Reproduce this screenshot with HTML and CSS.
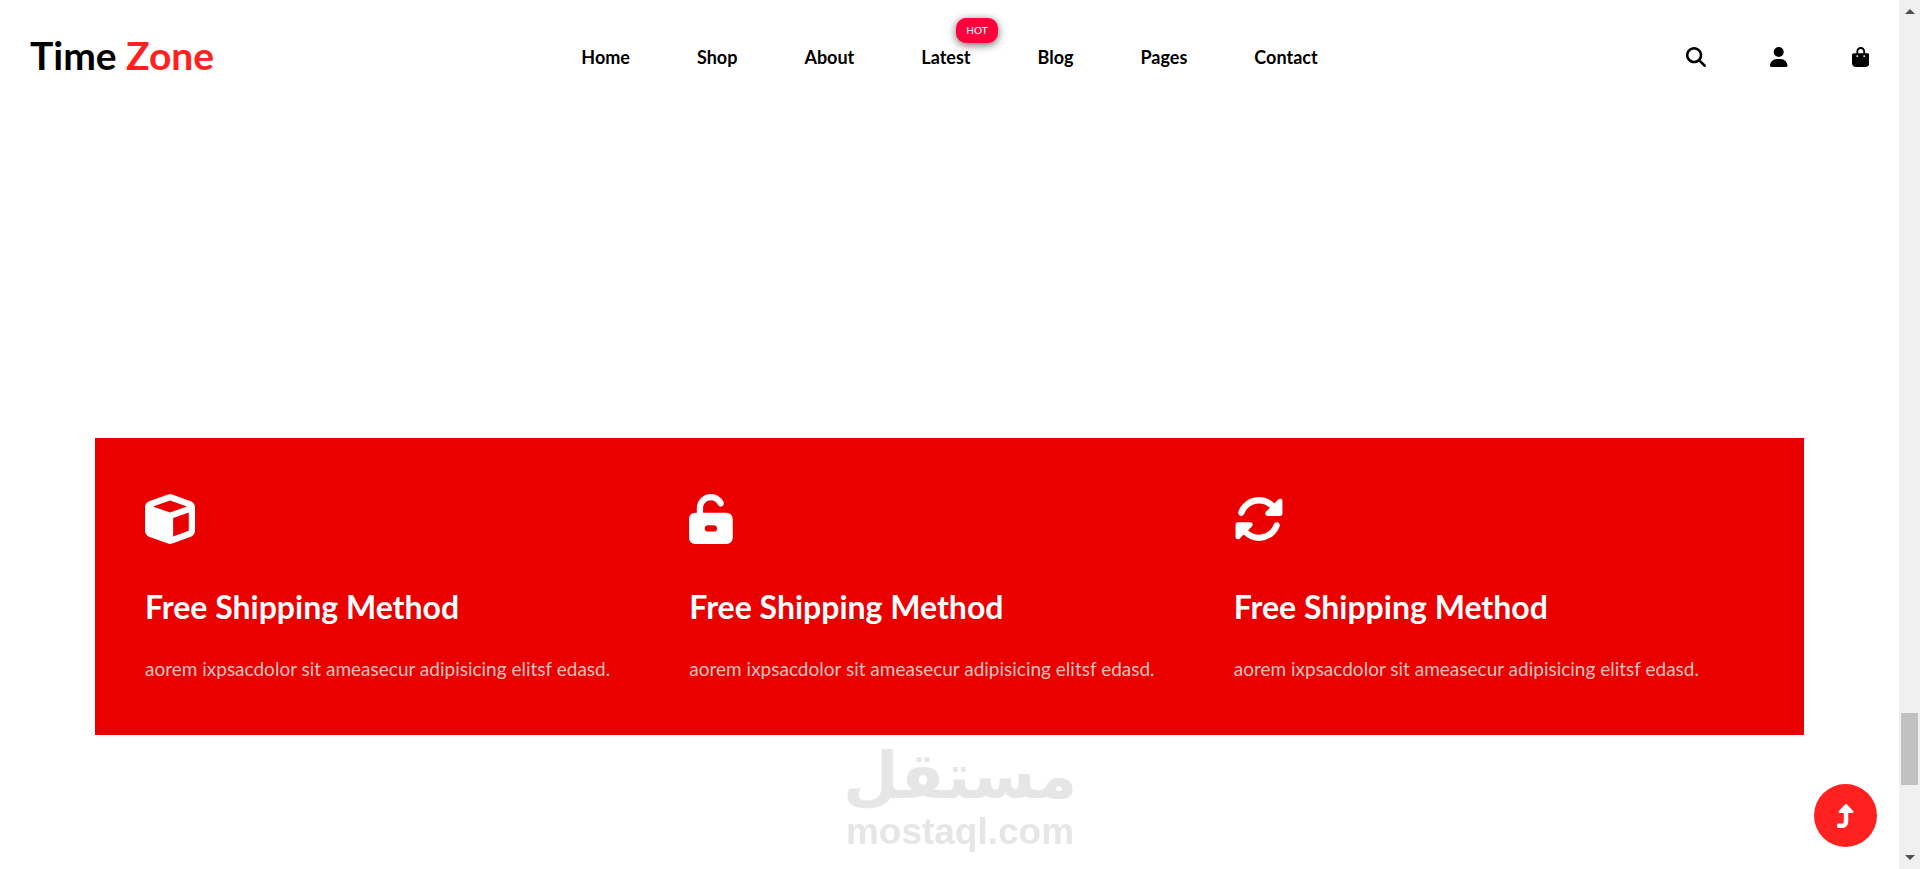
FILE: index.html
```html
<!DOCTYPE html>
<html lang="en">
<head>
<meta charset="utf-8">
<title>Time Zone</title>
<link rel="stylesheet" href="styles.css">
</head>
<body>
<div class="page">
  <header class="header">
    <a class="logo" href="#">Time <span class="logo-accent">Zone</span></a>
    <nav class="nav" aria-label="Main">
      <a href="#">Home</a>
      <a href="#">Shop</a>
      <a href="#">About</a>
      <a class="has-badge" href="#">Latest<span class="badge">HOT</span></a>
      <a href="#">Blog</a>
      <a href="#">Pages</a>
      <a href="#">Contact</a>
    </nav>
    <div class="actions">
      <button type="button" aria-label="Search"><svg class="icon-small" viewBox="0 0 512 512"><path d="M416 208c0 45.900-14.900 88.300-40 122.700L502.600 457.400c12.500 12.500 12.500 32.800 0 45.300s-32.800 12.500-45.300 0L330.700 376c-34.400 25.200-76.800 40-122.700 40C93.100 416 0 322.900 0 208S93.100 0 208 0S416 93.100 416 208zM208 352a144 144 0 1 0 0-288 144 144 0 1 0 0 288z"/></svg></button>
      <button type="button" aria-label="Account"><svg class="icon-small" viewBox="0 0 448 512"><path d="M224 256A128 128 0 1 0 224 0a128 128 0 1 0 0 256zm-45.700 48C79.800 304 0 383.800 0 482.300C0 498.700 13.300 512 29.700 512H418.300c16.400 0 29.700-13.300 29.700-29.700C448 383.800 368.200 304 269.700 304H178.300z"/></svg></button>
      <button type="button" aria-label="Cart"><svg class="icon-small" viewBox="0 0 448 512"><path d="M160 112c0-35.300 28.700-64 64-64s64 28.700 64 64v48H160V112zm-48 48H48c-26.500 0-48 21.500-48 48V416c0 53 43 96 96 96H352c53 0 96-43 96-96V208c0-26.500-21.500-48-48-48H336V112C336 50.100 285.900 0 224 0S112 50.100 112 112v48zm24 48a24 24 0 1 1 0 48 24 24 0 1 1 0-48zm152 24a24 24 0 1 1 48 0 24 24 0 1 1-48 0z"/></svg></button>
    </div>
  </header>

  <main class="main">
    <section class="features">
      <article class="feature">
        <svg class="icon-large" viewBox="0 0 512 512"><path d="M234.500 5.700c13.900-5 29.100-5 43.100 0l192 68.600C495 83.400 512 107.500 512 134.600V377.400c0 27-17 51.200-42.500 60.300l-192 68.600c-13.900 5-29.100 5-43.100 0l-192-68.600C17 428.600 0 404.500 0 377.400V134.600c0-27 17-51.200 42.500-60.300l192-68.600zM256 66L82.300 128 256 190l173.700-62L256 66zm32 368.600l160-57.100v-188L288 246.600v188z"/></svg>
        <h2>Free Shipping Method</h2>
        <p>aorem ixpsacdolor sit ameasecur adipisicing elitsf edasd.</p>
      </article>
      <article class="feature">
        <svg class="icon-large" viewBox="0 0 448 512"><path d="M224 64c-44.200 0-80 35.800-80 80v48H384c35.300 0 64 28.700 64 64V448c0 35.300-28.700 64-64 64H64c-35.300 0-64-28.700-64-64V256c0-35.300 28.700-64 64-64H80V144C80 64.500 144.500 0 224 0c57.500 0 107 33.700 130.100 82.300c7.600 16 .8 35.100-15.200 42.600s-35.100 .8-42.600-15.200C283.400 82.600 255.900 64 224 64zm32 320c17.700 0 32-14.300 32-32s-14.300-32-32-32H192c-17.700 0-32 14.300-32 32s14.300 32 32 32h64z"/></svg>
        <h2>Free Shipping Method</h2>
        <p>aorem ixpsacdolor sit ameasecur adipisicing elitsf edasd.</p>
      </article>
      <article class="feature">
        <svg class="icon-large" viewBox="0 0 512 512"><path d="M142.900 142.900c62.200-62.200 162.700-62.500 225.300-1L327 183c-6.900 6.900-8.900 17.200-5.200 26.200s12.500 14.800 22.200 14.800H472c13.300 0 24-10.700 24-24V72c0-9.700-5.800-18.500-14.800-22.200s-19.300-1.700-26.200 5.200L413.400 96.600c-87.600-86.500-228.700-86.200-315.800 1C73.200 122 55.600 150.700 44.800 181.400c-5.900 16.700 2.900 34.900 19.500 40.800s34.900-2.900 40.800-19.500c7.700-21.800 20.200-42.300 37.800-59.800zM16 312V440c0 9.700 5.800 18.500 14.800 22.200s19.300 1.700 26.200-5.200l41.600-41.600c87.600 86.500 228.700 86.200 315.800-1c24.400-24.400 42.100-53.100 52.900-83.700c5.900-16.700-2.900-34.900-19.500-40.800s-34.900 2.900-40.800 19.500c-7.700 21.800-20.200 42.300-37.800 59.800c-62.200 62.200-162.700 62.500-225.300 1L185 329c6.900-6.900 8.900-17.200 5.200-26.200s-12.500-14.800-22.200-14.800H40c-13.300 0-24 10.700-24 24z"/></svg>
        <h2>Free Shipping Method</h2>
        <p>aorem ixpsacdolor sit ameasecur adipisicing elitsf edasd.</p>
      </article>
    </section>
  </main>
</div>

<div class="scrollbar" aria-hidden="true">
  <svg class="scroll-arrow" viewBox="0 0 10 5"><path d="M0 5L5 0l5 5z"/></svg>
  <div class="scroll-track"><div class="scroll-thumb"></div></div>
  <svg class="scroll-arrow" viewBox="0 0 10 5"><path d="M0 0l5 5 5-5z"/></svg>
</div>

<div class="watermark">
  <span class="watermark-arabic" lang="ar" dir="rtl">مستقل</span>
  <span class="watermark-latin">mostaql.com</span>
</div>

<button class="to-top" type="button" aria-label="Back to top"><svg viewBox="0 0 384 512"><path d="M350 177.500c3.800-8.800 2-19-4.600-26l-136-144C204.900 2.700 198.600 0 192 0s-12.900 2.700-17.400 7.500l-136 144c-6.600 7-8.400 17.200-4.600 26s12.500 14.500 22 14.500h88l0 192c0 17.700-14.300 32-32 32H32c-17.700 0-32 14.300-32 32v32c0 17.700 14.300 32 32 32l80 0c70.700 0 128-57.300 128-128l0-192h88c9.600 0 18.200-5.700 22-14.500z"/></svg></button>
</body>
</html>
```
FILE: styles.css
```css
* {
  box-sizing: border-box;
}

body {
  margin: 0;
  min-height: 100vh;
  display: grid;
  grid-template-columns: 1fr 21px;
  background: #fff;
  color: #000;
  font-family: Lato, sans-serif;
}

a {
  color: inherit;
  text-decoration: none;
}

button {
  padding: 0;
  border: 0;
  background: none;
  color: inherit;
  cursor: pointer;
}

svg {
  display: block;
  fill: currentColor;
}

.header {
  display: grid;
  grid-template-columns: 1fr auto 1fr;
  align-items: center;
  padding: 27px 30px 25px;
}

.logo {
  padding-bottom: 4px;
  font-size: 39px;
  line-height: 56px;
  font-weight: 700;
}

.logo-accent {
  color: #ff2020;
}

.nav {
  display: flex;
  gap: 67px;
  font-size: 18px;
  line-height: 24px;
  font-weight: 700;
}

.has-badge {
  position: relative;
}

.badge {
  position: absolute;
  left: 35px;
  bottom: 26px;
  padding: 0 10px;
  border-radius: 10px;
  background: #ff003c;
  color: #fff;
  box-shadow: 0 2px 8px rgba(0, 0, 0, 0.6);
  font-size: 10px;
  font-weight: 500;
  line-height: 25px;
}

.actions {
  display: flex;
  justify-content: flex-end;
  gap: 64px;
}

.icon-small {
  height: 20px;
}

.main {
  padding: 326px 5% 0;
}

.features {
  display: grid;
  grid-template-columns: repeat(3, 1fr);
  gap: 6px;
  padding: 56px 32px 47px 50px;
  background: #eb0000;
  color: #fff;
}

.icon-large {
  height: 50px;
}

.feature h2 {
  margin: 43px 0 22px;
  font-size: 32px;
  line-height: 40px;
  font-weight: 700;
}

.feature p {
  margin: 0;
  color: #e0c0c0;
  font-size: 19px;
  line-height: 39px;
}

.scrollbar {
  display: flex;
  flex-direction: column;
  align-items: center;
  padding: 9px 2px;
  background: #f0f0f0;
  color: #505050;
}

.scroll-arrow {
  width: 10px;
}

.scroll-track {
  flex: 1;
  width: 100%;
  display: flex;
  flex-direction: column;
  justify-content: flex-end;
  padding-bottom: 70px;
}

.scroll-thumb {
  height: 72px;
  background: #c1c1c1;
}

.watermark {
  position: fixed;
  right: 0;
  bottom: 16px;
  left: 0;
  display: flex;
  flex-direction: column;
  align-items: center;
  color: #e6e6e6;
  font-weight: 700;
  pointer-events: none;
}

.watermark-arabic {
  font-family: "DejaVu Sans", sans-serif;
  font-size: 64px;
  line-height: 70px;
}

.watermark-latin {
  font-family: "Liberation Sans", sans-serif;
  font-size: 37px;
  line-height: 42px;
}

.to-top {
  position: fixed;
  right: 43px;
  bottom: 22px;
  display: grid;
  place-items: center;
  width: 63px;
  height: 63px;
  border-radius: 50%;
  background: #ff2020;
  color: #fff;
}

.to-top svg {
  height: 24px;
}
```
